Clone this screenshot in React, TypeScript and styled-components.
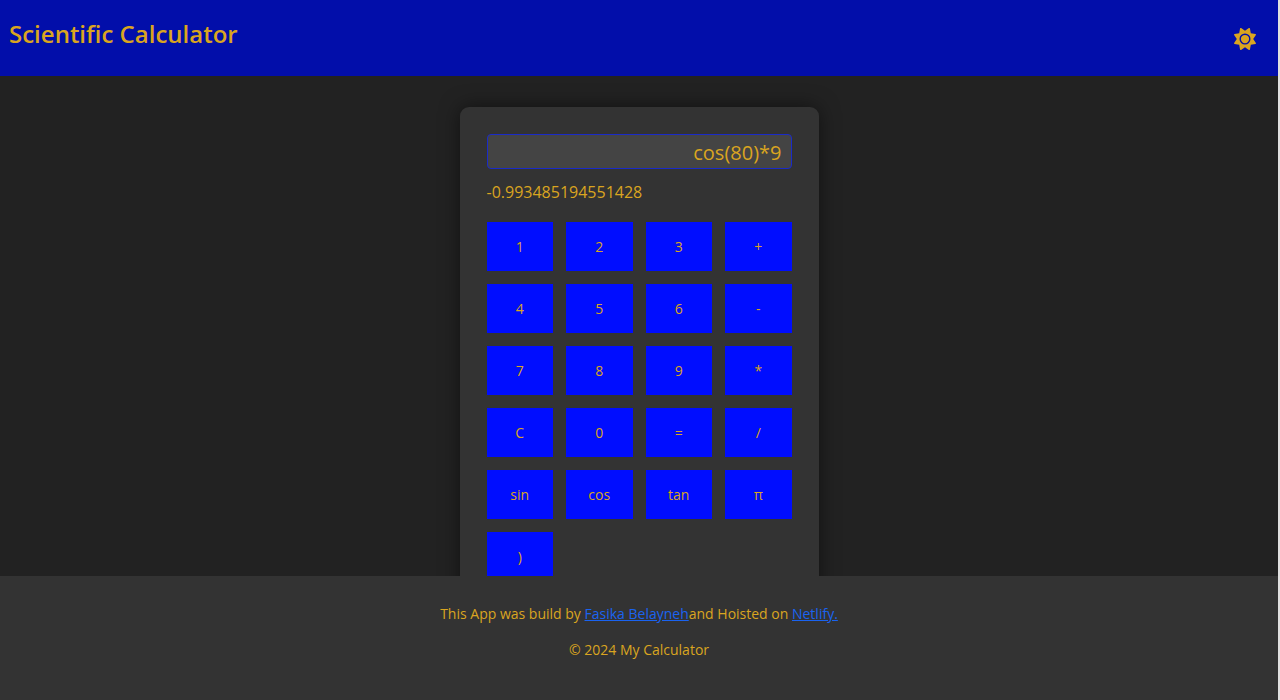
import React from "react";
import styled, { createGlobalStyle } from "styled-components";
import { FaSun } from "react-icons/fa6";

const GlobalStyle = createGlobalStyle`
  * { box-sizing: border-box; }
  body {
    margin: 0;
    background: #222;
    color: #daa520;
    font-family: "Open Sans", "Noto Sans", sans-serif;
    font-size: 14px;
  }
`;

const Page = styled.div`
  display: flex;
  flex-direction: column;
  height: 100vh;
  border-right: 2px solid #e0e0e0;
`;

const Header = styled.header`
  flex: none;
  display: flex;
  justify-content: space-between;
  align-items: flex-start;
  padding: 16px 22px 24px 9px;
  background: #020eaa;
`;

const Title = styled.h1`
  margin: 0;
  font-size: 24px;
  line-height: 36px;
  font-weight: 600;
`;

const ThemeToggle = styled.button`
  display: flex;
  margin-top: 12px;
  padding: 0;
  border: 0;
  background: none;
  color: inherit;
  font-size: 22px;
  cursor: pointer;
`;

const Main = styled.main`
  flex: 1;
  min-height: 0;
  overflow: hidden;
  display: flex;
  justify-content: center;
  align-items: flex-start;
  padding-top: 31px;
`;

const Calculator = styled.section`
  width: 359px;
  padding: 27px;
  border-radius: 9px;
  background: #333;
  box-shadow: 0 0 20px rgba(0, 0, 0, 0.5);
`;

const Display = styled.input`
  display: block;
  width: 100%;
  height: 35px;
  padding: 2px 9px 0;
  border: 1px solid #1a2bc8;
  border-radius: 4px;
  outline: none;
  background: #444;
  color: inherit;
  font-family: inherit;
  font-size: 20px;
  text-align: right;
`;

const Result = styled.output`
  display: block;
  margin: 9px 0 16px;
  font-size: 16px;
  line-height: 28px;
`;

const Keys = styled.div`
  display: grid;
  grid-template-columns: repeat(4, 1fr);
  gap: 13px;
`;

const Key = styled.button`
  height: 49px;
  padding: 0;
  border: 0;
  background: #000dff;
  color: #daa520;
  font-family: inherit;
  font-size: 14px;
  cursor: pointer;
`;

const Footer = styled.footer`
  flex: none;
  padding: 26px 0 38px;
  background: #333;
  text-align: center;
`;

const FooterLine = styled.p`
  margin: 0;
  line-height: 24px;

  & + & {
    margin-top: 12px;
  }
`;

const FooterLink = styled.a`
  color: #1a63f0;
`;

const keys = [
  "1", "2", "3", "+",
  "4", "5", "6", "-",
  "7", "8", "9", "*",
  "C", "0", "=", "/",
  "sin", "cos", "tan", "π",
  ")",
];

export default function App() {
  const [expression, setExpression] = React.useState("cos(80)*9");

  return (
    <>
      <GlobalStyle />
      <Page>
        <Header>
          <Title>Scientific Calculator</Title>
          <ThemeToggle type="button" aria-label="Toggle theme">
            <FaSun />
          </ThemeToggle>
        </Header>
        <Main>
          <Calculator>
            <Display
              id="expression"
              type="text"
              aria-label="Expression"
              value={expression}
              onChange={(event) => setExpression(event.target.value)}
            />
            <Result htmlFor="expression">-0.993485194551428</Result>
            <Keys>
              {keys.map((key) => (
                <Key key={key} type="button">{key}</Key>
              ))}
            </Keys>
          </Calculator>
        </Main>
        <Footer>
          <FooterLine>
            This App was build by <FooterLink href="#author">Fasika Belayneh</FooterLink>and
            Hoisted on <FooterLink href="#netlify">Netlify.</FooterLink>
          </FooterLine>
          <FooterLine>© 2024 My Calculator</FooterLine>
        </Footer>
      </Page>
    </>
  );
}
